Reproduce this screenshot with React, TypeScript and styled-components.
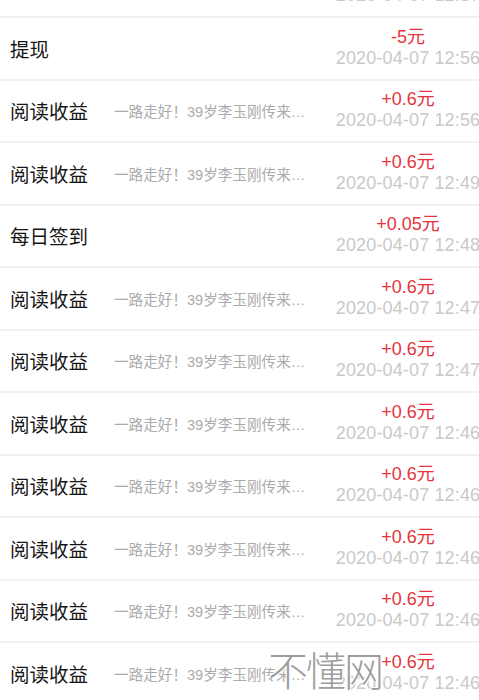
import React from "react";
import styled, {createGlobalStyle} from "styled-components";

const GlobalStyle = createGlobalStyle`
  html, body {
    margin: 0;
    padding: 0;
    background: #fff;
  }
  body {
    font-family: "Liberation Sans", "Noto Sans CJK SC", sans-serif;
  }
`;

const Page = styled.div`
  position: relative;
  width: 479px;
  height: 700px;
  overflow: hidden;
  background: #fff;
`;

const List = styled.div`
  display: flex;
  flex-direction: column;
  margin-top: -44.5px;
`;

const Row = styled.div`
  display: flex;
  align-items: center;
  height: 62.5px;
  box-sizing: border-box;
  padding-left: 10px;
  border-bottom: 2px solid #f1f1f1;
`;

const Title = styled.div`
  width: 104px;
  flex-shrink: 0;
  font-family: "Noto Sans CJK SC", sans-serif;
  font-size: 19.5px;
  color: #161616;
`;

const Desc = styled.div`
  width: 198px;
  flex-shrink: 0;
  font-family: "Liberation Sans", "Noto Sans CJK SC", sans-serif;
  font-size: 14.6px;
  color: #ababab;
  white-space: nowrap;
  overflow: hidden;
  text-overflow: ellipsis;
`;

const Side = styled.div`
  margin-left: auto;
  margin-right: -2px;
  width: 146px;
  flex-shrink: 0;
  display: flex;
  flex-direction: column;
  align-items: center;
  white-space: nowrap;
  margin-top: -1px;
`;

const Amount = styled.div`
  font-size: 18px;
  line-height: 21px;
  color: #e5343b;
`;

const Time = styled.div`
  font-size: 18px;
  line-height: 21px;
  letter-spacing: 0.15px;
  color: #c9c9c9;
`;

const Watermark = styled.div`
  position: absolute;
  left: 268px;
  top: 640px;
  font-family: "Noto Sans CJK SC", sans-serif;
  font-size: 40px;
  font-weight: 300;
  letter-spacing: -2px;
  color: rgba(130, 130, 130, 0.8);
  text-shadow: 1px 1px 0 #fff, -1px -1px 0 #fff;
  pointer-events: none;
`;

interface Record {
  title: string
  desc?: string
  amount: string
  time: string
}

const news = "一路走好！39岁李玉刚传来噩耗令人惋惜";

const records: Record[] = [
  {title: "阅读收益", desc: news, amount: "+0.6元", time: "2020-04-07 12:57"},
  {title: "提现", amount: "-5元", time: "2020-04-07 12:56"},
  {title: "阅读收益", desc: news, amount: "+0.6元", time: "2020-04-07 12:56"},
  {title: "阅读收益", desc: news, amount: "+0.6元", time: "2020-04-07 12:49"},
  {title: "每日签到", amount: "+0.05元", time: "2020-04-07 12:48"},
  {title: "阅读收益", desc: news, amount: "+0.6元", time: "2020-04-07 12:47"},
  {title: "阅读收益", desc: news, amount: "+0.6元", time: "2020-04-07 12:47"},
  {title: "阅读收益", desc: news, amount: "+0.6元", time: "2020-04-07 12:46"},
  {title: "阅读收益", desc: news, amount: "+0.6元", time: "2020-04-07 12:46"},
  {title: "阅读收益", desc: news, amount: "+0.6元", time: "2020-04-07 12:46"},
  {title: "阅读收益", desc: news, amount: "+0.6元", time: "2020-04-07 12:46"},
  {title: "阅读收益", desc: news, amount: "+0.6元", time: "2020-04-07 12:46"},
];

const App = () => {
  return (
    <Page>
      <GlobalStyle/>
      <List>
        {records.map((item, i) => (
          <Row key={i}>
            <Title>{item.title}</Title>
            {item.desc && <Desc>{item.desc}</Desc>}
            <Side>
              <Amount>{item.amount}</Amount>
              <Time>{item.time}</Time>
            </Side>
          </Row>
        ))}
      </List>
      <Watermark>不懂网</Watermark>
    </Page>
  )
}
export default App
